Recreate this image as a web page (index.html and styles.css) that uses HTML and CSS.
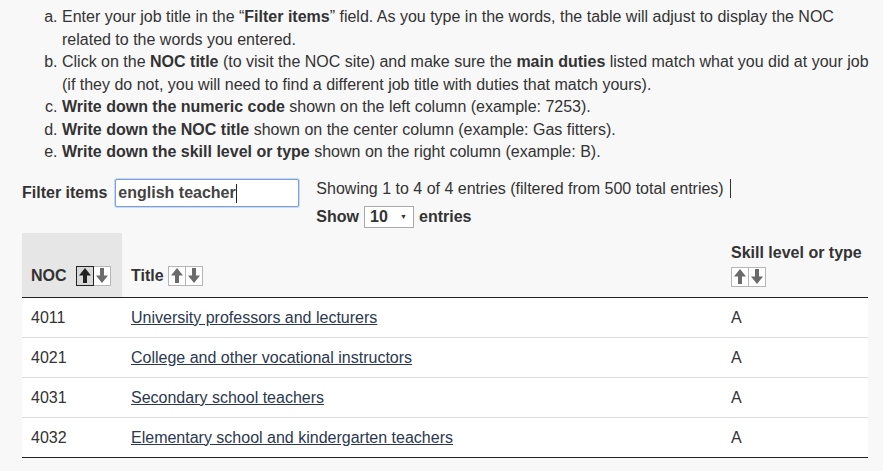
FILE: index.html
```html
<!DOCTYPE html>
<html lang="en">
<head>
<meta charset="utf-8">
<title>NOC search</title>
<link rel="stylesheet" href="styles.css">
</head>
<body>
<div class="page">
  <ol class="steps">
    <li>Enter your job title in the “<b>Filter items</b>” field. As you type in the words, the table will adjust to display the NOC related to the words you entered.</li>
    <li>Click on the <b>NOC title</b> (to visit the NOC site) and make sure the <b>main duties</b> listed match what you did at your job (if they do not, you will need to find a different job title with duties that match yours).</li>
    <li><b>Write down the numeric code</b> shown on the left column (example: 7253).</li>
    <li><b>Write down the NOC title</b> shown on the center column (example: Gas fitters).</li>
    <li><b>Write down the skill level or type</b> shown on the right column (example: B).</li>
  </ol>

  <div class="controls">
    <div class="filter">
      <label class="filter-label" for="filter">Filter items</label>
      <span class="input-wrap">
        <input id="filter" class="filter-input" type="text" value="english teacher">
        <span class="caret"></span>
      </span>
    </div>
    <div class="info">
      <div class="info-line">Showing 1 to 4 of 4 entries (filtered from 500 total entries) <span class="bar"></span></div>
      <div class="show-line">
        <b>Show</b>
        <span class="select"><b>10</b><span class="select-arrow">▼</span></span>
        <b>entries</b>
      </div>
    </div>
  </div>

  <table class="noc-table">
    <colgroup>
      <col class="c-noc">
      <col class="c-title">
      <col class="c-skill">
    </colgroup>
    <thead>
      <tr>
        <th class="th-active"><span class="th-inner">NOC <span class="sort sort-noc"><span class="sbtn sbtn-on"><svg viewBox="0 0 14 17" width="14" height="17"><polygon points="7,1 13,8.5 9,8.5 9,16 5,16 5,8.5 1,8.5"/></svg></span><span class="sbtn"><svg viewBox="0 0 14 17" width="14" height="17"><polygon points="7,16 13,8.5 9,8.5 9,1 5,1 5,8.5 1,8.5"/></svg></span></span></span></th>
        <th><span class="th-inner">Title <span class="sort"><span class="sbtn"><svg viewBox="0 0 14 17" width="14" height="17"><polygon points="7,1 13,8.5 9,8.5 9,16 5,16 5,8.5 1,8.5"/></svg></span><span class="sbtn"><svg viewBox="0 0 14 17" width="14" height="17"><polygon points="7,16 13,8.5 9,8.5 9,1 5,1 5,8.5 1,8.5"/></svg></span></span></span></th>
        <th class="th-skill"><div class="skill-label">Skill level or type</div><span class="sort sort-skill"><span class="sbtn"><svg viewBox="0 0 14 17" width="14" height="17"><polygon points="7,1 13,8.5 9,8.5 9,16 5,16 5,8.5 1,8.5"/></svg></span><span class="sbtn"><svg viewBox="0 0 14 17" width="14" height="17"><polygon points="7,16 13,8.5 9,8.5 9,1 5,1 5,8.5 1,8.5"/></svg></span></span></th>
      </tr>
    </thead>
    <tbody>
      <tr><td>4011</td><td><a href="#">University professors and lecturers</a></td><td>A</td></tr>
      <tr><td>4021</td><td><a href="#">College and other vocational instructors</a></td><td>A</td></tr>
      <tr><td>4031</td><td><a href="#">Secondary school teachers</a></td><td>A</td></tr>
      <tr><td>4032</td><td><a href="#">Elementary school and kindergarten teachers</a></td><td>A</td></tr>
    </tbody>
  </table>
</div>
</body>
</html>
```

FILE: styles.css
```css
html, body {
  margin: 0;
  padding: 0;
  background: #f8f8f8;
}

body {
  font-family: "Liberation Sans", Arial, sans-serif;
  font-size: 16px;
  color: #333;
}

.page {
  padding: 6px 0 0 22px;
}

.steps {
  margin: 0;
  padding-left: 40px;
  padding-right: 8px;
  list-style: lower-alpha;
  line-height: 22.5px;
}

.controls {
  display: flex;
  align-items: flex-start;
  margin-top: 14px;
}

.filter {
  display: flex;
  align-items: center;
  gap: 8px;
  margin-top: 1px;
}

.filter-label {
  font-weight: bold;
}

.input-wrap {
  position: relative;
  display: inline-block;
}

.filter-input {
  display: block;
  box-sizing: border-box;
  width: 184px;
  height: 28px;
  margin: 0;
  padding: 0 2px;
  border: 1px solid #7b9ee0;
  box-shadow: 0 0 0 1px #c9d8f3;
  border-radius: 2px;
  background: #fff;
  font: bold 16px "Liberation Sans", Arial, sans-serif;
  color: #444;
  outline: none;
}

.caret {
  position: absolute;
  left: 121px;
  top: 5px;
  width: 1px;
  height: 19px;
  background: #222;
}

.info {
  margin-left: 17px;
}

.info-line {
  line-height: 22px;
}

.bar {
  display: inline-block;
  width: 1px;
  height: 19px;
  background: #333;
  vertical-align: -4px;
  margin-left: 2px;
}

.show-line {
  display: flex;
  align-items: center;
  gap: 5px;
  margin-top: 6px;
}

.select {
  display: inline-flex;
  align-items: center;
  justify-content: space-between;
  box-sizing: border-box;
  width: 50px;
  height: 22px;
  padding: 0 6px 0 5px;
  border: 1px solid #aaa;
  background: #fff;
  font-size: 16px;
}

.select-arrow {
  font-size: 7px;
  color: #333;
}

.noc-table {
  margin-top: 5px;
  width: 846px;
  border-collapse: collapse;
  table-layout: fixed;
}

.c-noc { width: 100px; }
.c-title { width: 600px; }
.c-skill { width: 146px; }

.noc-table th {
  text-align: left;
  vertical-align: bottom;
  font-weight: bold;
  line-height: 22px;
  padding: 9px 9px 10px;
  border-bottom: 1px solid #222;
}

.noc-table th.th-skill {
  padding-right: 2px;
}

.noc-table th.th-active {
  background: #e6e6e6;
}

.th-inner {
  display: flex;
  align-items: center;
}

.sort {
  display: inline-flex;
  margin-left: 4px;
}

.sort-noc {
  margin-left: 9px;
}

.skill-label {
  white-space: nowrap;
}

.sort-skill {
  display: flex;
  margin-left: 0;
  margin-top: 3px;
}

.sbtn {
  display: inline-flex;
  align-items: center;
  justify-content: center;
  box-sizing: border-box;
  width: 18px;
  height: 20px;
  border: 1px solid #b5b5b5;
  background: #fff;
}

.sbtn + .sbtn {
  margin-left: -1px;
}

.sbtn svg {
  fill: #6a6a6a;
}

.sbtn-on {
  border-color: #222;
  background: #d9d9d9;
  position: relative;
  z-index: 1;
}

.sbtn-on svg {
  fill: #222;
}

.noc-table td {
  background: #fff;
  padding: 9px 9px 8px;
  line-height: 22px;
  border-bottom: 1px solid #ddd;
}

.noc-table tbody tr:last-child td {
  border-bottom: 1px solid #222;
}

.noc-table a {
  color: #2b3850;
  text-decoration: underline;
}
```
